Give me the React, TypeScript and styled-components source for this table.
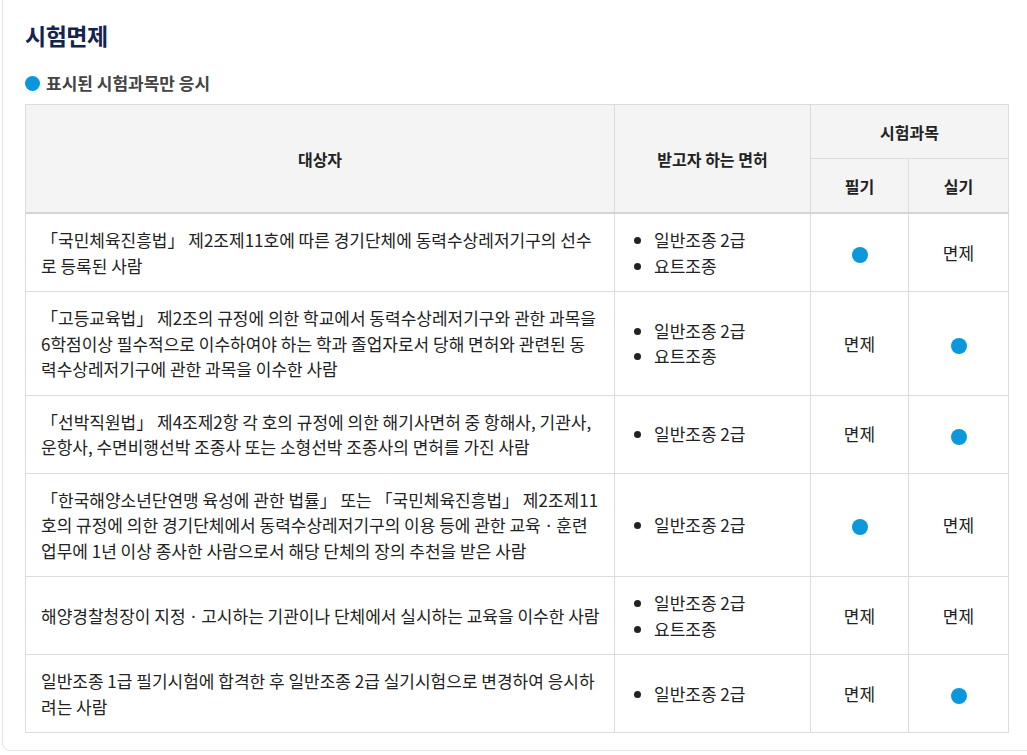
import { createGlobalStyle } from 'styled-components';
import styled from 'styled-components';

const GlobalStyle = createGlobalStyle`
  html, body {
    margin: 0;
    padding: 0;
    background: #fff;
    overflow: hidden;
  }
  body {
    font-family: "Noto Sans CJK KR", "Noto Sans", sans-serif;
    color: #333;
  }
`;

const Card = styled.section`
  margin: -12px 0 0 2px;
  width: 1060px;
  padding: 31px 0 17px 22px;
  border: 1px solid #e3e3e3;
  border-radius: 8px;
  box-sizing: border-box;
`;

const Title = styled.h2`
  margin: 0;
  font-size: 23px;
  line-height: 30px;
  font-weight: 700;
  color: #14244f;
  letter-spacing: -0.5px;
`;

const Note = styled.p`
  display: flex;
  align-items: center;
  gap: 6px;
  margin: 22px 0 10px;
  font-size: 17px;
  line-height: 22px;
  font-weight: 700;
  color: #444;
`;

const Dot = styled.span<{ $size?: number }>`
  display: inline-block;
  width: ${(p) => p.$size ?? 15}px;
  height: ${(p) => p.$size ?? 15}px;
  border-radius: 50%;
  background: #0a97dc;
  vertical-align: middle;
`;

const Table = styled.table`
  width: 983px;
  border-collapse: collapse;
  table-layout: fixed;
  font-size: 17px;
  color: #222;
`;

const Th = styled.th<{ $last?: boolean }>`
  background: #f4f4f4;
  border: 1px solid #dcdcdc;
  border-bottom: ${(p) => (p.$last ? '2px solid #d4d4d4' : '1px solid #dcdcdc')};
  font-size: 16px;
  font-weight: 700;
  color: #222;
  text-align: center;
  padding: 0;
  height: 53px;
`;

const Td = styled.td<{ $center?: boolean }>`
  border: 1px solid #dcdcdc;
  padding: 13px ${(p) => (p.$center ? 15 : 14)}px 13px 15px;
  line-height: 25.5px;
  text-align: ${(p) => (p.$center ? 'center' : 'left')};
  vertical-align: middle;
  word-break: break-all;
`;

const List = styled.ul`
  margin: 0;
  padding-left: 24px;
  list-style: disc;

  li {
    line-height: 25.5px;
  }
`;

type Row = {
  target: string;
  licenses: string[];
  written: boolean;
  practical: boolean;
};

const rows: Row[] = [
  {
    target:
      '「국민체육진흥법」 제2조제11호에 따른 경기단체에 동력수상레저기구의 선수로 등록된 사람',
    licenses: ['일반조종 2급', '요트조종'],
    written: true,
    practical: false,
  },
  {
    target:
      '「고등교육법」 제2조의 규정에 의한 학교에서 동력수상레저기구와 관한 과목을 6학점이상 필수적으로 이수하여야 하는 학과 졸업자로서 당해 면허와 관련된 동력수상레저기구에 관한 과목을 이수한 사람',
    licenses: ['일반조종 2급', '요트조종'],
    written: false,
    practical: true,
  },
  {
    target:
      '「선박직원법」 제4조제2항 각 호의 규정에 의한 해기사면허 중 항해사, 기관사, 운항사, 수면비행선박 조종사 또는 소형선박 조종사의 면허를 가진 사람',
    licenses: ['일반조종 2급'],
    written: false,
    practical: true,
  },
  {
    target:
      '「한국해양소년단연맹 육성에 관한 법률」 또는 「국민체육진흥법」 제2조제11호의 규정에 의한 경기단체에서 동력수상레저기구의 이용 등에 관한 교육ㆍ훈련업무에 1년 이상 종사한 사람으로서 해당 단체의 장의 추천을 받은 사람',
    licenses: ['일반조종 2급'],
    written: true,
    practical: false,
  },
  {
    target: '해양경찰청장이 지정ㆍ고시하는 기관이나 단체에서 실시하는 교육을 이수한 사람',
    licenses: ['일반조종 2급', '요트조종'],
    written: false,
    practical: false,
  },
  {
    target:
      '일반조종 1급 필기시험에 합격한 후 일반조종 2급 실기시험으로 변경하여 응시하려는 사람',
    licenses: ['일반조종 2급'],
    written: false,
    practical: true,
  },
];

function Mark({ on }: { on: boolean }) {
  return on ? <Dot $size={16} /> : <>면제</>;
}

export default function App() {
  return (
    <>
      <GlobalStyle />
      <Card>
        <Title>시험면제</Title>
        <Note>
          <Dot />
          표시된 시험과목만 응시
        </Note>
        <Table>
          <colgroup>
            <col style={{ width: 589 }} />
            <col style={{ width: 196 }} />
            <col style={{ width: 98 }} />
            <col style={{ width: 100 }} />
          </colgroup>
          <thead>
            <tr>
              <Th rowSpan={2} $last>
                대상자
              </Th>
              <Th rowSpan={2} $last>
                받고자 하는 면허
              </Th>
              <Th colSpan={2}>시험과목</Th>
            </tr>
            <tr>
              <Th $last>필기</Th>
              <Th $last>실기</Th>
            </tr>
          </thead>
          <tbody>
            {rows.map((row, i) => (
              <tr key={i}>
                <Td>{row.target}</Td>
                <Td>
                  <List>
                    {row.licenses.map((l) => (
                      <li key={l}>{l}</li>
                    ))}
                  </List>
                </Td>
                <Td $center>
                  <Mark on={row.written} />
                </Td>
                <Td $center>
                  <Mark on={row.practical} />
                </Td>
              </tr>
            ))}
          </tbody>
        </Table>
      </Card>
    </>
  );
}
